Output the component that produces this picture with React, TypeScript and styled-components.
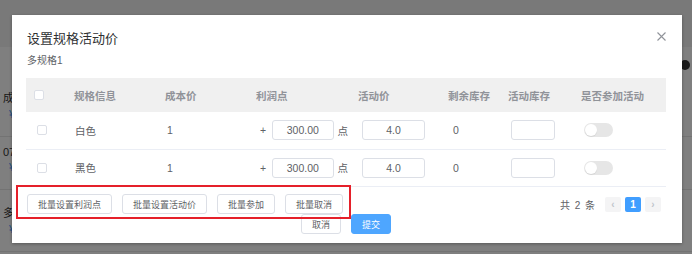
import styled, { createGlobalStyle } from "styled-components";

const GlobalStyle = createGlobalStyle`
  html, body {
    margin: 0;
    padding: 0;
    background: #fff;
  }
  body {
    font-family: "Liberation Sans", "Noto Sans CJK SC", sans-serif;
    color: #606266;
  }
`;

const Page = styled.div`
  position: relative;
  width: 692px;
  height: 254px;
  overflow: hidden;
  background: #fff;
`;

/* page behind the dialog */
const PageHeader = styled.div`
  height: 47px;
  background: #f2f2f2;
`;

const ListItem = styled.div<{ $h: number }>`
  height: ${(p) => p.$h}px;
  border-bottom: 1px solid #e6e6e6;
  padding: 0 0 16px 3px;
  display: flex;
  flex-direction: column;
  justify-content: flex-end;
  box-sizing: border-box;
  font-size: 11px;
  color: #333;
  gap: 4px;
`;

const Price = styled.span`
  color: #409eff;
  font-size: 10px;
  padding-left: 6px;
`;

const RightDot = styled.div`
  position: absolute;
  right: 2px;
  top: 60px;
  width: 10px;
  height: 10px;
  border-radius: 50%;
  background: #333;
`;

const Overlay = styled.div`
  position: absolute;
  inset: 0;
  background: rgba(0, 0, 0, 0.5);
  padding: 15px 0 0 12px;
`;

const Dialog = styled.div`
  position: relative;
  width: 670px;
  background: #fff;
  box-shadow: 0 1px 3px rgba(0, 0, 0, 0.3);
  padding: 15px 16px 9px 14px;
  box-sizing: border-box;
`;

const Title = styled.div`
  font-size: 13px;
  line-height: 18px;
  color: #303133;
  padding-left: 1px;
`;

const Close = styled.button`
  position: absolute;
  right: 15px;
  top: 16px;
  width: 11px;
  height: 11px;
  padding: 0;
  border: none;
  background: none;
  display: flex;
  cursor: pointer;
`;

const SubTitle = styled.div`
  margin-top: 6px;
  font-size: 10px;
  line-height: 14px;
  color: #606266;
  padding-left: 1px;
`;

const Table = styled.div`
  margin-top: 10px;
  width: 640px;
`;

const cols = "38px 91px 91px 102px 90px 60px 73px 95px";

const HeadRow = styled.div`
  display: grid;
  grid-template-columns: ${cols};
  height: 34px;
  align-items: center;
  background: #f0f0f0;
`;

const HeadCell = styled.div`
  padding-left: 10px;
  font-size: 10.5px;
  font-weight: bold;
  color: #909399;
  white-space: nowrap;
`;

const Row = styled.div`
  display: grid;
  grid-template-columns: ${cols};
  height: 37.5px;
  align-items: center;
  border-bottom: 1px solid #ebeef5;
  box-sizing: border-box;
`;

const Cell = styled.div<{ $pad?: number }>`
  padding-left: ${(p) => p.$pad ?? 11}px;
  font-size: 10.5px;
  color: #606266;
  display: flex;
  align-items: center;
  white-space: nowrap;
`;

const Check = styled.span`
  display: block;
  width: 10px;
  height: 10px;
  border: 1px solid #dcdfe6;
  border-radius: 2px;
  background: #fff;
  box-sizing: border-box;
`;

const Input = styled.div<{ $w: number }>`
  width: ${(p) => p.$w}px;
  height: 20px;
  border: 1px solid #dcdfe6;
  border-radius: 3px;
  box-sizing: border-box;
  display: flex;
  align-items: center;
  justify-content: center;
  font-size: 10.5px;
  color: #606266;
`;

const Plus = styled.span`
  margin: 0 6px 0 3px;
`;

const Unit = styled.span`
  margin-left: 4px;
`;

const Switch = styled.span`
  width: 29px;
  height: 14px;
  border-radius: 7px;
  background: #e6e6e6;
  position: relative;
  display: block;
  margin-left: 3px;

  &::after {
    content: "";
    position: absolute;
    left: 1px;
    top: 1px;
    width: 12px;
    height: 12px;
    border-radius: 50%;
    background: #fff;
    box-shadow: 0 1px 1px rgba(0, 0, 0, 0.08);
  }
`;

const BottomBar = styled.div`
  margin-top: 7px;
  width: 640px;
  display: flex;
  align-items: center;
  justify-content: space-between;
`;

const BatchGroup = styled.div`
  position: relative;
  display: flex;
  gap: 10px;
  padding-left: 1px;

  &::after {
    content: "";
    position: absolute;
    left: -10px;
    top: -9px;
    right: -8px;
    bottom: -5px;
    border: 2px solid #e5202a;
    pointer-events: none;
  }
`;

const Button = styled.button<{ $primary?: boolean }>`
  height: 20px;
  padding: 0 10px;
  font-family: inherit;
  font-size: 9px;
  border-radius: 3px;
  border: 1px solid ${(p) => (p.$primary ? "#4ea6ff" : "#dcdfe6")};
  background: ${(p) => (p.$primary ? "#4ea6ff" : "#fff")};
  color: ${(p) => (p.$primary ? "#fff" : "#606266")};
  white-space: nowrap;
  cursor: pointer;
`;

const Pager = styled.div`
  display: flex;
  align-items: center;
  gap: 4px;
  margin-right: 5px;
  font-size: 10px;
  color: #606266;
`;

const Total = styled.span`
  margin-right: 5px;
  letter-spacing: 1px;
`;

const PageBtn = styled.span<{ $active?: boolean }>`
  width: 16px;
  height: 15px;
  border-radius: 2px;
  display: flex;
  align-items: center;
  justify-content: center;
  background: ${(p) => (p.$active ? "#409eff" : "#f4f4f5")};
  color: ${(p) => (p.$active ? "#fff" : "#c0c4cc")};
  font-weight: bold;
  font-size: 10px;
`;

const Footer = styled.div`
  display: flex;
  justify-content: center;
  gap: 10px;
`;

const rows = [
  { name: "白色", cost: "1", profit: "300.00", price: "4.0", stock: "0" },
  { name: "黑色", cost: "1", profit: "300.00", price: "4.0", stock: "0" },
];

const heads = ["规格信息", "成本价", "利润点", "活动价", "剩余库存", "活动库存", "是否参加活动"];

export default function App() {
  return (
    <>
      <GlobalStyle />
      <Page>
        <PageHeader />
        <ListItem $h={90}>
          <span>成本</span>
          <Price>¥ 1</Price>
        </ListItem>
        <ListItem $h={53}>
          <span>0701</span>
          <Price>¥ 1</Price>
        </ListItem>
        <ListItem $h={62}>
          <span>多规格</span>
          <Price>¥ 2</Price>
        </ListItem>
        <RightDot />
        <Overlay>
          <Dialog>
            <Title>设置规格活动价</Title>
            <Close aria-label="close">
              <svg width="11" height="11" viewBox="0 0 11 11">
                <path d="M1.5 1.5l8 8M9.5 1.5l-8 8" stroke="#909399" strokeWidth="1.1" />
              </svg>
            </Close>
            <SubTitle>多规格1</SubTitle>
            <Table>
              <HeadRow>
                <Cell $pad={8}>
                  <Check />
                </Cell>
                {heads.map((h) => (
                  <HeadCell key={h}>{h}</HeadCell>
                ))}
              </HeadRow>
              {rows.map((r) => (
                <Row key={r.name}>
                  <Cell $pad={11}>
                    <Check />
                  </Cell>
                  <Cell $pad={11}>{r.name}</Cell>
                  <Cell $pad={12}>{r.cost}</Cell>
                  <Cell $pad={11}>
                    <Plus>+</Plus>
                    <Input $w={64}>{r.profit}</Input>
                    <Unit>点</Unit>
                  </Cell>
                  <Cell $pad={14}>
                    <Input $w={63}>{r.price}</Input>
                  </Cell>
                  <Cell $pad={15}>{r.stock}</Cell>
                  <Cell $pad={13}>
                    <Input $w={44} />
                  </Cell>
                  <Cell $pad={10}>
                    <Switch />
                  </Cell>
                </Row>
              ))}
            </Table>
            <BottomBar>
              <BatchGroup>
                <Button>批量设置利润点</Button>
                <Button>批量设置活动价</Button>
                <Button>批量参加</Button>
                <Button>批量取消</Button>
              </BatchGroup>
              <Pager>
                <Total>共 2 条</Total>
                <PageBtn>‹</PageBtn>
                <PageBtn $active>1</PageBtn>
                <PageBtn>›</PageBtn>
              </Pager>
            </BottomBar>
            <Footer>
              <Button>取消</Button>
              <Button $primary>提交</Button>
            </Footer>
          </Dialog>
        </Overlay>
      </Page>
    </>
  );
}
